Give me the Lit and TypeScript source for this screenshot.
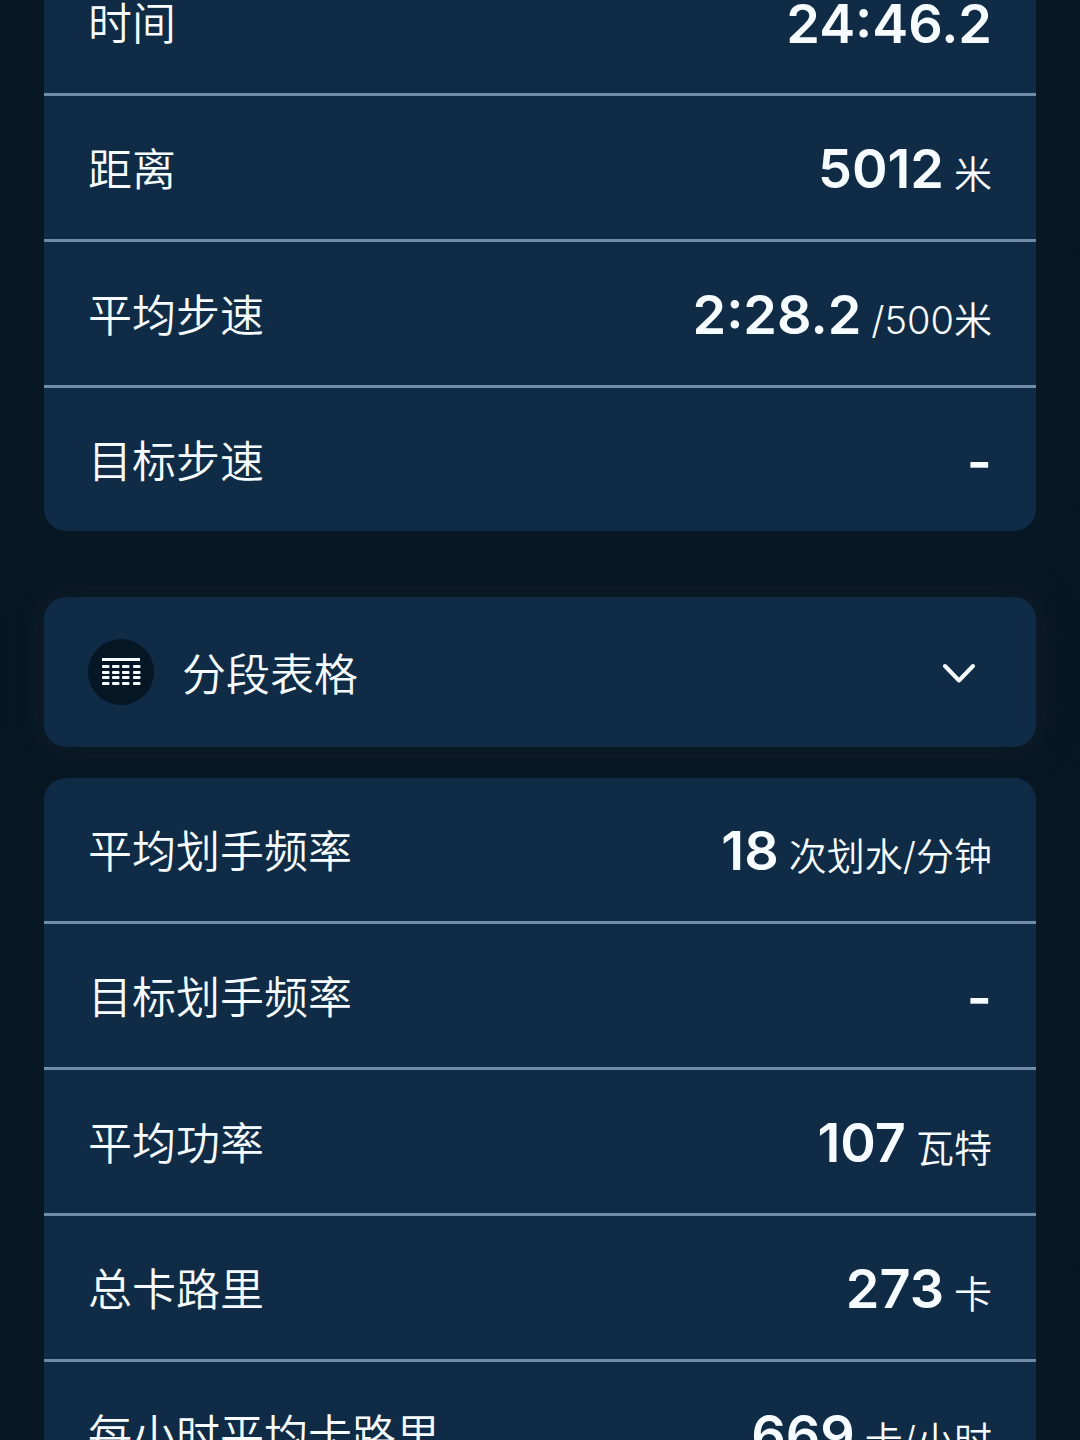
import { LitElement, html, css, svg } from "lit";
import { customElement, property, state } from "lit/decorators.js";

interface Metric {
  label: string;
  value: string;
  unit?: string;
}

const SUMMARY: Metric[] = [
  { label: "时间", value: "24:46.2" },
  { label: "距离", value: "5012", unit: "米" },
  { label: "平均步速", value: "2:28.2", unit: "/500米" },
  { label: "目标步速", value: "-" },
];

const DETAILS: Metric[] = [
  { label: "平均划手频率", value: "18", unit: "次划水/分钟" },
  { label: "目标划手频率", value: "-" },
  { label: "平均功率", value: "107", unit: "瓦特" },
  { label: "总卡路里", value: "273", unit: "卡" },
  { label: "每小时平均卡路里", value: "669", unit: "卡/小时" },
];

@customElement("metric-card")
export class MetricCard extends LitElement {
  @property({ attribute: false }) metrics: Metric[] = [];

  static styles = css`
    :host {
      display: block;
    }
    .list {
      margin: 0;
      border-radius: 22px;
      background: #0f2b45;
      overflow: hidden;
    }
    .row {
      display: flex;
      align-items: center;
      justify-content: space-between;
      gap: 24px;
      height: 143px;
      padding: 0 44px;
    }
    .row + .row {
      border-top: 3px solid #6f8ca8;
    }
    .label {
      padding-bottom: 2px;
      font-family: "Noto Sans CJK SC", sans-serif;
      font-size: 44px;
      line-height: 64px;
      font-weight: 350;
    }
    .reading {
      display: flex;
      align-items: baseline;
      gap: 10px;
      margin: 0;
      padding-top: 4px;
      white-space: nowrap;
    }
    .value {
      font-family: Inter, "Noto Sans CJK SC", sans-serif;
      font-size: 54px;
      line-height: 64px;
      font-weight: 600;
    }
    .unit {
      font-family: Inter, "Noto Sans CJK SC", sans-serif;
      font-size: 38px;
      line-height: 56px;
      font-weight: 350;
    }
  `;

  render() {
    return html`<dl class="list">
      ${this.metrics.map(
        (m) => html`<div class="row">
          <dt class="label">${m.label}</dt>
          <dd class="reading">
            <span class="value">${m.value}</span>
            ${m.unit ? html`<span class="unit">${m.unit}</span>` : null}
          </dd>
        </div>`
      )}
    </dl>`;
  }
}

@customElement("app-root")
export class AppRoot extends LitElement {
  @state() private expanded = false;

  static styles = css`
    :host {
      display: block;
      height: 100vh;
      overflow: hidden;
      background: linear-gradient(90deg, #061622, #071724 4%, #071724 96%, #051521);
      color: #f6fcff;
      font-family: "Noto Sans CJK SC", sans-serif;
    }
    .page {
      display: flex;
      flex-direction: column;
      margin-top: -50px;
      padding: 0 44px;
    }
    .splits {
      display: flex;
      align-items: center;
      gap: 28px;
      width: 100%;
      height: 150px;
      margin: 66px 0 31px;
      padding: 0 60px 0 44px;
      border: 0;
      border-radius: 22px;
      background: #0f2b45;
      box-shadow: 0 0 36px rgba(32, 40, 44, 0.4);
      color: inherit;
      font: inherit;
      font-size: 44px;
      line-height: 64px;
      font-weight: 350;
      text-align: left;
      cursor: pointer;
    }
    .badge {
      display: flex;
      align-items: center;
      justify-content: center;
      width: 66px;
      height: 66px;
      border-radius: 50%;
      background: #051624;
    }
    .title {
      flex: 1;
    }
    .chevron {
      display: block;
    }
    .chevron.open {
      transform: rotate(180deg);
    }
  `;

  render() {
    return html`<main class="page">
      <metric-card .metrics=${SUMMARY}></metric-card>
      <button
        class="splits"
        type="button"
        aria-expanded=${this.expanded ? "true" : "false"}
        @click=${() => (this.expanded = !this.expanded)}
      >
        <span class="badge">
          <svg width="40" height="30" viewBox="0 0 40 30" fill="#f6fcff" aria-hidden="true">
            <rect x="1" y="1" width="38" height="3" />
            ${[8, 14, 19, 25].map((y) =>
              [1, 11, 21, 32].map((x) => svg`<rect x=${x} y=${y} width="7.5" height="3" rx="1" />`)
            )}
          </svg>
        </span>
        <span class="title">分段表格</span>
        <svg
          class="chevron ${this.expanded ? "open" : ""}"
          width="34"
          height="22"
          viewBox="0 0 34 22"
          fill="none"
          stroke="#f6fcff"
          stroke-width="4"
          stroke-linecap="round"
          stroke-linejoin="round"
          aria-hidden="true"
        >
          <path d="M3 5 17 19.500 31 5" />
        </svg>
      </button>
      <metric-card .metrics=${DETAILS}></metric-card>
    </main>`;
  }
}
